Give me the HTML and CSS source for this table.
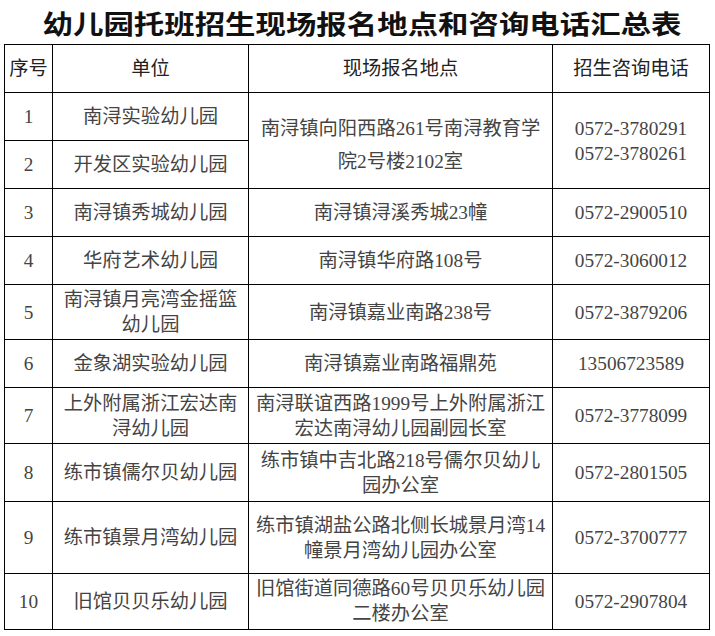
FILE: index.html
```html
<!DOCTYPE html>
<html lang="zh-CN">
<head>
<meta charset="utf-8">
<title>幼儿园托班招生现场报名地点和咨询电话汇总表</title>
<link rel="stylesheet" href="styles.css">
</head>
<body>
<div class="title"><span class="title-text">幼儿园托班招生现场报名地点和咨询电话汇总表</span></div>
<table class="sheet">
  <colgroup>
    <col class="c-no">
    <col class="c-unit">
    <col class="c-addr">
    <col class="c-tel">
  </colgroup>
  <thead>
    <tr class="h-head">
      <th>序号</th>
      <th>单位</th>
      <th>现场报名地点</th>
      <th>招生咨询电话</th>
    </tr>
  </thead>
  <tbody>
    <tr class="h48">
      <td>1</td>
      <td>南浔实验幼儿园</td>
      <td rowspan="2" class="addr-merged">南浔镇向阳西路261号南浔教育学<br>院2号楼2102室</td>
      <td rowspan="2">0572-3780291<br>0572-3780261</td>
    </tr>
    <tr class="h48">
      <td>2</td>
      <td>开发区实验幼儿园</td>
    </tr>
    <tr class="h48">
      <td>3</td>
      <td>南浔镇秀城幼儿园</td>
      <td>南浔镇浔溪秀城23幢</td>
      <td>0572-2900510</td>
    </tr>
    <tr class="h48">
      <td>4</td>
      <td>华府艺术幼儿园</td>
      <td>南浔镇华府路108号</td>
      <td>0572-3060012</td>
    </tr>
    <tr class="h55">
      <td>5</td>
      <td>南浔镇月亮湾金摇篮<br>幼儿园</td>
      <td>南浔镇嘉业南路238号</td>
      <td>0572-3879206</td>
    </tr>
    <tr class="h48">
      <td>6</td>
      <td>金象湖实验幼儿园</td>
      <td>南浔镇嘉业南路福鼎苑</td>
      <td>13506723589</td>
    </tr>
    <tr class="h56">
      <td>7</td>
      <td>上外附属浙江宏达南<br>浔幼儿园</td>
      <td>南浔联谊西路1999号上外附属浙江<br>宏达南浔幼儿园副园长室</td>
      <td>0572-3778099</td>
    </tr>
    <tr class="h58">
      <td>8</td>
      <td>练市镇儒尔贝幼儿园</td>
      <td>练市镇中吉北路218号儒尔贝幼儿<br>园办公室</td>
      <td>0572-2801505</td>
    </tr>
    <tr class="h72">
      <td>9</td>
      <td>练市镇景月湾幼儿园</td>
      <td>练市镇湖盐公路北侧长城景月湾14<br>幢景月湾幼儿园办公室</td>
      <td>0572-3700777</td>
    </tr>
    <tr class="h56">
      <td>10</td>
      <td>旧馆贝贝乐幼儿园</td>
      <td class="addr-up">旧馆街道同德路60号贝贝乐幼儿园<br>二楼办公室</td>
      <td>0572-2907804</td>
    </tr>
  </tbody>
</table>
</body>
</html>
```
FILE: styles.css
```css
html, body {
  margin: 0;
  padding: 0;
  background: #ffffff;
}

body {
  font-family: "Liberation Serif", "Noto Sans CJK SC", serif;
  color: #444444;
}

.title {
  height: 44px;
  line-height: 46px;
  text-align: center;
  padding-left: 9px;
  box-sizing: border-box;
  overflow: hidden;
}

.title-text {
  display: inline-block;
  font-family: "Noto Sans CJK SC", sans-serif;
  font-weight: 700;
  font-size: 26px;
  color: #111111;
  transform: scaleX(1.17);
  transform-origin: center;
}

.sheet {
  margin-left: 4px;
  border-collapse: collapse;
  table-layout: fixed;
  width: 705px;
  font-size: 19.3px;
  line-height: 25px;
}

.c-no { width: 48px; }
.c-unit { width: 196px; }
.c-addr { width: 304px; }
.c-tel { width: 157px; }

.sheet th,
.sheet td {
  border: 1.5px solid #000000;
  padding: 0;
  text-align: center;
  vertical-align: middle;
  white-space: nowrap;
  font-weight: 400;
}

.sheet th {
  color: #222222;
}

.h-head { height: 48px; }
.h48 { height: 48px; }
.h55 { height: 55px; }
.h56 { height: 56px; }
.h58 { height: 58px; }
.h72 { height: 72px; }

.sheet td.addr-merged {
  line-height: 33px;
  vertical-align: top;
  padding-top: 19px;
}

.sheet td.addr-up {
  vertical-align: top;
  padding-top: 2px;
}
```
